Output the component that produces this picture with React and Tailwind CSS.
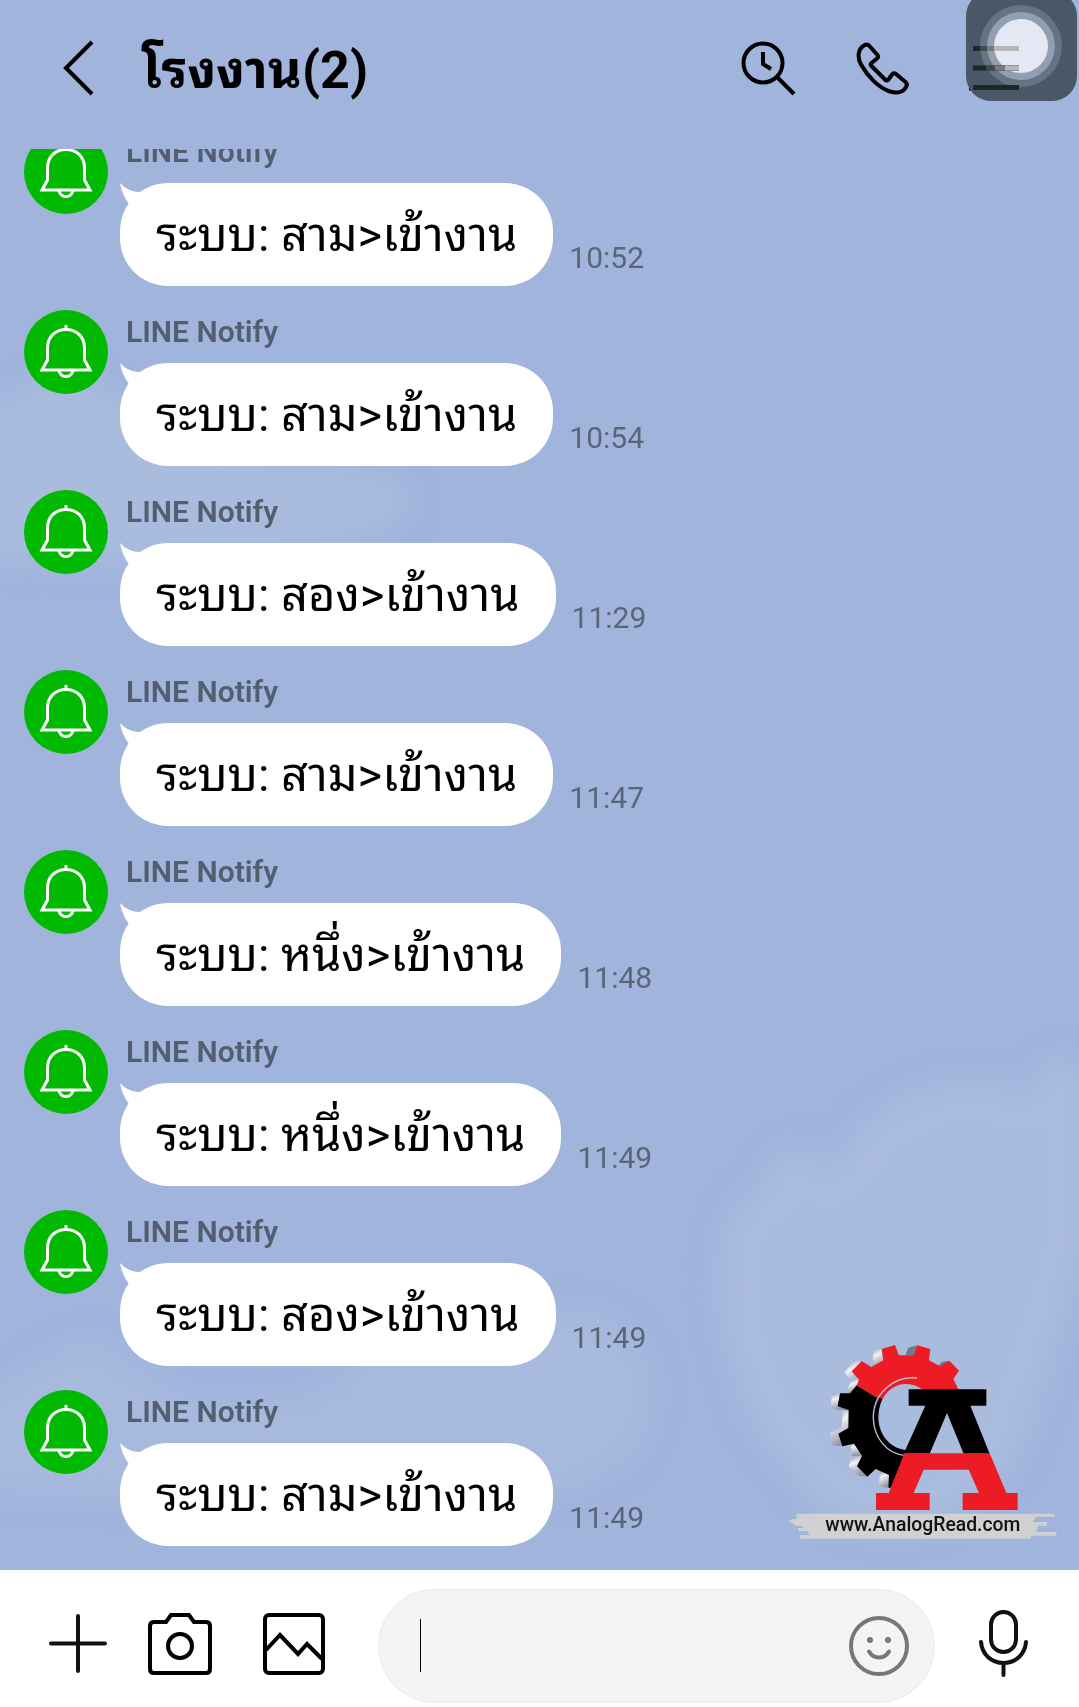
const messages = [
  { id: 1, text: 'ระบบ: สาม>เข้างาน', time: '10:52' },
  { id: 2, text: 'ระบบ: สาม>เข้างาน', time: '10:54' },
  { id: 3, text: 'ระบบ: สอง>เข้างาน', time: '11:29' },
  { id: 4, text: 'ระบบ: สาม>เข้างาน', time: '11:47' },
  { id: 5, text: 'ระบบ: หนึ่ง>เข้างาน', time: '11:48' },
  { id: 6, text: 'ระบบ: หนึ่ง>เข้างาน', time: '11:49' },
  { id: 7, text: 'ระบบ: สอง>เข้างาน', time: '11:49' },
  { id: 8, text: 'ระบบ: สาม>เข้างาน', time: '11:49' },
]

function BellAvatar() {
  return (
    <svg viewBox="0 0 84 84" className="size-[84px] shrink-0" aria-hidden="true">
      <circle cx="42" cy="42" r="42" fill="#00b900" />
      <g fill="none" stroke="#fff" strokeWidth="3">
        <path d="M42 15v5M42 19.5C31 19.5 23.5 27 23.5 38v12l-5.500 10h48l-5.500-10V38C60.500 27 53 19.500 42 19.500z" />
        <path d="M35 60a7 6.500 0 0 0 14 0" />
      </g>
    </svg>
  )
}

function Message({ text, time }) {
  return (
    <li className="flex shrink-0 items-start gap-3">
      <BellAvatar />
      <div>
        <p className="h-[53px] pl-1.5 pt-1 text-[30px] leading-9 font-semibold text-[#535f70]">LINE Notify</p>
        <div className="flex items-end gap-4">
          <div className="relative flex h-[103px] items-center rounded-[48px] bg-white px-9">
            <svg viewBox="0 0 34 36" className="absolute left-0 top-0 h-9 w-[34px]" fill="#fff" aria-hidden="true">
              <path d="M0 0q8 9 20 9l12-5v30H4l5-13Q2 12 0 0z" />
            </svg>
            <p className="relative whitespace-nowrap text-[47px] leading-none text-black">{text}</p>
          </div>
          <time className="pb-3 text-[30px] leading-8 text-[#5a6678]">{time}</time>
        </div>
      </div>
    </li>
  )
}

function Clouds() {
  return (
    <svg viewBox="0 0 1079 1570" preserveAspectRatio="none" className="absolute inset-0 size-full" aria-hidden="true">
      <defs>
        <filter id="soft" x="-20%" y="-20%" width="140%" height="140%" colorInterpolationFilters="sRGB">
          <feGaussianBlur stdDeviation="14" />
        </filter>
      </defs>
      <g fill="#aabcde" filter="url(#soft)">
        <path d="M725 1330C710 1250 730 1200 765 1185C775 1140 815 1140 825 1175C850 1150 865 1110 915 1095C950 1080 1000 1075 1030 1100C1035 1055 1070 1050 1085 1080V1240C1070 1300 1050 1360 1020 1450C960 1540 860 1560 800 1480C760 1440 740 1400 725 1330z" />
        <path d="M-20 410C20 400 40 370 90 380C150 440 300 450 390 480C440 510 380 540 290 550C200 570 60 560 -20 560z" opacity=".9" />
        <path d="M-20 1400C30 1370 70 1340 100 1340C130 1370 150 1380 190 1400C260 1410 310 1400 340 1380C360 1330 420 1310 500 1330C560 1300 620 1300 650 1370C660 1420 640 1470 560 1490C400 1510 200 1500 -20 1490z" opacity=".7" />
      </g>
    </svg>
  )
}

function AnalogReadLogo() {
  return (
    <svg viewBox="0 0 810 594" className="absolute bottom-7 right-[21px] w-[270px]" role="img" aria-label="www.AnalogRead.com">
      <defs>
        <linearGradient id="steel" x1="0" y1="0" x2="0.300" y2="1">
          <stop offset="0" stopColor="#8f94a8" />
          <stop offset=".4" stopColor="#f1f1f6" />
          <stop offset="1" stopColor="#9497a9" />
        </linearGradient>
      </defs>
      <g transform="translate(-25 -73)">
        <g fill="url(#steel)">
          <path d="M306 88l-22-1-5 32 6 12-12 8 20 6 20-18z" />
          <path d="M246 124l-26 4-26 30 16 20 28 4-4 20-22-25z" />
          <path d="M238 180l-22 0-16 38 11 4 24-22z" />
          <path d="M181 221l-22-2-8 46 26 6 32 0-2-15-33 4z" />
          <path d="M190 272l-4 52-35 17 8 36 29 3-12-38 31-17v-50z" />
          <path d="M188 380l25-2 4 32 26 0 4-4-24-34z" />
          <path d="M247 408l-30 4-10 28 32 30h24l-31-31z" />
          <path d="M301 454l-3 46 28 5 2-40z" />
        </g>
        <path d="M413 77l-27 7-9 23h26zM509 123l-22 3-12 13 8 3z" fill="#6d7a97" />
        <path d="M231 197l-20 24-30 0-7 39 33 11-1 54-30 17 12 38 35-8 24 36-15 32 31 31 25-23 40 18-2 38h8l44-103C317 394 284 350 284 290c0-18 4-36 14-53z" fill="#000" />
        <path d="M231 197l7-17-22-25 30-31 29 18 36-20-5-34 40-12 12 31h44l11-30 39 11-4 34 33 18 28-17 29 30-17 25 16 32H430c-52-33-100-15-124 33z" fill="#ed1c24" />
        <path d="M308 238l-9-4c-44 85 3 167 75 173l8-15c-70-8-106-80-74-154z" fill="#000" />
        <path d="M412 175c-69-8-131 47-131 117 0 62 41 111 94 115" fill="none" stroke="#b9c3d8" strokeWidth="4" />
        <path d="M387 209h233v49h-48l58 144h-78l-50-122-52 122h-78l65-144h-50z" fill="#000" />
        <path d="M374 401h256l50 119h34v51H549v-51h49l-31-70H432l-30 70h48v51H289v-51h38z" fill="#ed1c24" />
        <path d="M50 582h775v9h-55l-12 16h44v11h-27l-5 19h60v11h-75l-4 9H62v-11h28l-8-12H55v-9h17l-9-7H45l-5-8-14-4 12-8h14z" fill="#cfd1d2" />
        <text x="137" y="635" fontFamily="Roboto, sans-serif" fontSize="58" fontWeight="500" fill="#111">www.AnalogRead.com</text>
      </g>
    </svg>
  )
}

function TopBar() {
  return (
    <header className="relative flex h-[149px] shrink-0 items-center pb-3 pl-[62px] pr-16">
      <button type="button" aria-label="Back">
        <svg viewBox="0 0 34 60" className="h-[60px] w-[34px]" fill="none" stroke="#000" strokeWidth="4">
          <path d="M30 3L4 29l26 26" />
        </svg>
      </button>
      <h1 className="flex-1 pl-[46px] pt-1 text-[52px] leading-none font-bold text-black">โรงงาน(2)</h1>
      <div className="flex items-center gap-[58px]">
        <button type="button" aria-label="Search history">
          <svg viewBox="0 0 56 56" className="size-14" fill="none" stroke="#000" strokeWidth="4">
            <circle cx="22" cy="22" r="19.500" />
            <path d="M22 11v12l8 5M36 36l17 17" />
          </svg>
        </button>
        <button type="button" aria-label="Call">
          <svg viewBox="0 0 56 56" className="size-14" fill="none" stroke="#000" strokeWidth="4" strokeLinejoin="round">
            <path d="M9 4.500C3 8 2 16 6 23.500C13 36 24 47 35 50.500C43 53 49 51 51.500 45Q52.500 43 50.500 41L41 33Q39 31.500 37.500 33L33 39Q32 40 30.500 39L16.500 25Q15 23.500 16.500 22L22 17.500Q24 16 22.500 14L14 4.500Q12 2.500 9 4.500z" />
          </svg>
        </button>
        <button type="button" aria-label="Menu">
          <svg viewBox="0 0 46 56" className="h-14 w-[46px]" stroke="#000" strokeWidth="5">
            <path d="M0 8h46M0 27.500h46M0 47h46" />
          </svg>
        </button>
      </div>

      {/* assistive touch */}
      <svg viewBox="0 0 111 101" className="absolute right-[2px] top-0 h-[101px] w-[111px]" aria-hidden="true">
        <rect x="0" y="-9" width="111" height="110" rx="25" fill="#4a5767" />
        <circle cx="55" cy="46" r="41" fill="#657383" />
        <circle cx="55" cy="46" r="34" fill="#939eb0" />
        <circle cx="55" cy="46" r="27" fill="#e4e8f4" />
        <path d="M7 48.500h46M7 68h46M7 87.500h46" stroke="#1e262b" strokeWidth="5" />
        <path d="M14 48.500h39M20 68h33" stroke="#3f4a4c" strokeWidth="5" />
        <path d="M21 48.500h32M29 68h24" stroke="#777b7e" strokeWidth="5" />
        <path d="M28 48.500h25M39 68h14" stroke="#b5b6b5" strokeWidth="5" />
      </svg>
    </header>
  )
}

function Composer() {
  return (
    <form className="flex h-[137px] shrink-0 items-center bg-white px-[46px] pt-3.5">
      <div className="flex items-center gap-9">
        <button type="button" aria-label="Add">
          <svg viewBox="0 0 64 68" className="h-[68px] w-16" stroke="#111" strokeWidth="4" strokeLinecap="round">
            <path d="M32 4v55M5 31.500h54" />
          </svg>
        </button>
        <button type="button" aria-label="Camera">
          <svg viewBox="0 0 68 68" className="h-[68px] w-[68px]" fill="none" stroke="#000" strokeWidth="4">
            <path d="M8 10h12l5-7h18l5 7h12q4 0 4 4v43q0 4-4 4H8q-4 0-4-4V14q0-4 4-4z" />
            <circle cx="34" cy="34" r="12" />
          </svg>
        </button>
        <button type="button" aria-label="Gallery" className="ml-3">
          <svg viewBox="0 0 64 68" className="h-[68px] w-16" fill="none" stroke="#000" strokeWidth="4">
            <rect x="3" y="3" width="58" height="58" rx="4" />
            <path d="M4 38l14-15 18 19 9-10 15 15" />
          </svg>
        </button>
      </div>
      <div className="ml-[52px] flex h-[114px] min-w-0 flex-1 items-center rounded-full border-2 border-[#efefef] bg-[#f4f4f4] pl-10 pr-6">
        <span className="h-[53px] w-px bg-black" />
        <input type="text" aria-label="Message" className="h-16 min-w-0 flex-1 bg-transparent px-2 text-[40px] outline-none" />
        <button type="button" aria-label="Stickers">
          <svg viewBox="0 0 60 60" className="size-[60px]" fill="none" stroke="#777" strokeWidth="4" strokeLinecap="round">
            <circle cx="30" cy="30" r="28" />
            <path d="M20 35.500q3.500 6 10 6t10-6" />
            <circle cx="21" cy="24" r="3" fill="#777" stroke="none" />
            <circle cx="39" cy="24" r="3" fill="#777" stroke="none" />
          </svg>
        </button>
      </div>
      <button type="button" aria-label="Voice message" className="ml-10">
        <svg viewBox="0 0 58 72" className="h-[72px] w-[58px]" fill="none" stroke="#111" strokeWidth="4" strokeLinecap="round">
          <rect x="16" y="2" width="25" height="40" rx="12.500" />
          <path d="M6 32c1 12 10 21 22.500 21S50 44 51 32M28.500 53v12" />
        </svg>
      </button>
    </form>
  )
}

export default function App() {
  return (
    <div className="flex h-screen flex-col bg-[#a1b4dc] font-[Roboto,'Noto_Sans_Thai_Looped','Noto_Sans_Thai','Noto_Sans',sans-serif]">
      <div className="relative flex min-h-0 flex-1 flex-col">
        <Clouds />
        <TopBar />
        <main className="relative flex min-h-0 flex-1 flex-col overflow-hidden">
          <ul className="flex min-h-0 flex-1 flex-col justify-end gap-6 px-6 pb-6">
            {messages.map(m => (
              <Message key={m.id} text={m.text} time={m.time} />
            ))}
          </ul>
          <AnalogReadLogo />
        </main>
      </div>
      <Composer />
    </div>
  )
}
